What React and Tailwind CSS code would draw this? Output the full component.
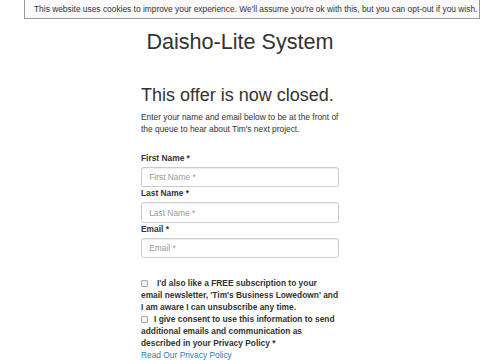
export default function App() {
  return (
    <div className="w-[480px] h-[360px] overflow-hidden bg-white text-[#333]" style={{ fontFamily: '"Liberation Sans", Arial, sans-serif' }}>
      <div className="ml-[24px] h-[19px] border-x border-b border-[#999] bg-[#fafafa] flex items-center pl-[9px] text-[8.4px] whitespace-nowrap text-[#333]">
        This website uses cookies to improve your experience. We'll assume you're ok with this, but you can opt-out if you wish.
      </div>
      <h1 className="text-center text-[21.6px] leading-[24px] mt-[11px]">Daisho-Lite System</h1>
      <div className="w-[198px] mx-auto">
        <h2 className="text-[18px] leading-[20px] mt-[31px]">This offer is now closed.</h2>
        <p className="text-[8.4px] leading-[12px] mt-[6px]">
          Enter your name and email below to be at the front of the queue to hear about Tim's next project.
        </p>
        <div className="mt-[17px] flex flex-col">
          <label className="text-[8.4px] leading-[12px] font-bold">First Name *</label>
          <input className="mt-[3px] h-[20.4px] border border-[#ccc] rounded-[2.4px] px-[7.2px] text-[8.4px] placeholder:text-[#999] shadow-[inset_0_1px_1px_rgba(0,0,0,0.075)] outline-none" placeholder="First Name *" />
          <label className="text-[8.4px] leading-[12px] font-bold">Last Name *</label>
          <input className="mt-[3px] h-[20.4px] border border-[#ccc] rounded-[2.4px] px-[7.2px] text-[8.4px] placeholder:text-[#999] shadow-[inset_0_1px_1px_rgba(0,0,0,0.075)] outline-none" placeholder="Last Name *" />
          <label className="text-[8.4px] leading-[12px] font-bold">Email *</label>
          <input className="mt-[3px] h-[20.4px] border border-[#ccc] rounded-[2.4px] px-[7.2px] text-[8.4px] placeholder:text-[#999] shadow-[inset_0_1px_1px_rgba(0,0,0,0.075)] outline-none" placeholder="Email *" />
        </div>
        <div className="mt-[19px] text-[8.4px] leading-[12px] font-bold">
          <p>
            <span className="inline-block w-[7px] h-[7px] border border-[#aaa] rounded-[1px] bg-[#f3f3f3] align-[-0.5px] mr-[9px]"></span>
            I'd also like a FREE subscription to your email newsletter, 'Tim's Business Lowedown' and I am aware I can unsubscribe any time.
          </p>
          <p>
            <span className="inline-block w-[7px] h-[7px] border border-[#aaa] rounded-[1px] bg-[#f3f3f3] align-[-0.5px] mr-[6px]"></span>
            I give consent to use this information to send additional emails and communication as described in your Privacy Policy *
          </p>
          <a className="font-normal text-[#337ab7] block">Read Our Privacy Policy</a>
        </div>
      </div>
    </div>
  );
}
